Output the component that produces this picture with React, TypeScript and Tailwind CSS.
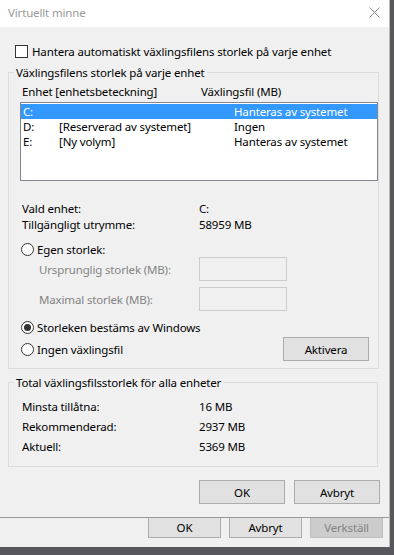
import type { ReactNode } from 'react';

const font = { fontFamily: '"Segoe UI", "Noto Sans", "Open Sans", sans-serif' };

function Radio({ checked }: { checked?: boolean }) {
  return (
    <span className="flex h-[13px] w-[13px] shrink-0 items-center justify-center rounded-full border border-[#333333] bg-white">
      {checked && <span className="h-[7px] w-[7px] rounded-full bg-[#333333]" />}
    </span>
  );
}

function Button({ children, className = '' }: { children: ReactNode; className?: string }) {
  return (
    <div
      className={`flex h-[24px] w-[86px] items-center justify-center border border-[#adadad] bg-[#e1e1e1] text-black ${className}`}
    >
      {children}
    </div>
  );
}

function GroupBox({ title, children, className = '' }: { title: string; children: ReactNode; className?: string }) {
  return (
    <fieldset className={`ml-[8px] w-[370px] border border-[#dcdcdc] ${className}`}>
      <legend className="ml-[5px] px-[2px] leading-[15px]">{title}</legend>
      {children}
    </fieldset>
  );
}

function InfoRow({ label, value, h }: { label: string; value: string; h: string }) {
  return (
    <div className={`flex items-center ${h}`}>
      <span className="w-[190px] pl-[13px]">{label}</span>
      <span>{value}</span>
    </div>
  );
}

const drives = [
  { drive: 'C:', label: '', size: 'Hanteras av systemet', selected: true },
  { drive: 'D:', label: '[Reserverad av systemet]', size: 'Ingen' },
  { drive: 'E:', label: '[Ny volym]', size: 'Hanteras av systemet' },
];

export default function App() {
  return (
    <div
      className="flex h-[555px] w-[394px] flex-col bg-[#58585c] text-[11.5px] leading-[15px] tracking-[-0.15px] text-black"
      style={font}
    >
      <div className="flex h-[547px]">
        <div className="flex w-[390px] flex-col border-r border-[#b9b9b9] bg-[#f0f0f0]">
          {/* Title bar */}
          <div className="flex h-[27px] shrink-0 items-center justify-between bg-white pb-[2px] pl-[8px] pr-[9px]">
            <span className="text-[#999999]">Virtuellt minne</span>
            <svg width="11" height="11" viewBox="0 0 11 11">
              <path d="M0.5 0.5 L10.5 10.5 M10.5 0.5 L0.5 10.5" stroke="#8a8a8a" strokeWidth="1" fill="none" />
            </svg>
          </div>

          {/* Dialog body */}
          <div className="flex h-[491px] shrink-0 flex-col border-b border-[#9a9a9a]">
            <div className="mt-[17px] flex h-[15px] items-center gap-[4px] pl-[15px]">
              <span className="h-[13px] w-[13px] border border-[#333333] bg-white" />
              <span>Hantera automatiskt växlingsfilens storlek på varje enhet</span>
            </div>

            <GroupBox title="Växlingsfilens storlek på varje enhet" className="mt-[6px] pb-[7px]">
              <div className="mt-[4px] flex h-[15px] items-center">
                <span className="w-[192px] pl-[13px]">Enhet [enhetsbeteckning]</span>
                <span>Växlingsfil (MB)</span>
              </div>

              <div className="ml-[11px] mt-[3px] h-[79px] w-[358px] border border-[#828790] bg-white pt-[1px]">
                {drives.map((d) => (
                  <div
                    key={d.drive}
                    className={`flex h-[15px] items-center ${d.selected ? 'bg-[#3399ff] text-white' : ''}`}
                  >
                    <span className="w-[38px] pl-[2px]">{d.drive}</span>
                    <span className="w-[175px]">{d.label}</span>
                    <span>{d.size}</span>
                  </div>
                ))}
              </div>

              <div className="mt-[19px]">
                <InfoRow label="Vald enhet:" value="C:" h="h-[16px]" />
                <InfoRow label="Tillgängligt utrymme:" value="58959 MB" h="h-[16px]" />
              </div>

              <div className="mt-[10px] flex h-[15px] items-center gap-[3px] pl-[12px]">
                <Radio />
                <span>Egen storlek:</span>
              </div>

              <div className="flex h-[24px] items-center">
                <span className="w-[190px] pl-[30px] text-[#838383]">Ursprunglig storlek (MB):</span>
                <span className="h-[24px] w-[88px] border border-[#cccccc] bg-[#f0f0f0]" />
              </div>
              <div className="mt-[6px] flex h-[24px] items-center">
                <span className="w-[190px] pl-[30px] text-[#838383]">Maximal storlek (MB):</span>
                <span className="h-[24px] w-[88px] border border-[#cccccc] bg-[#f0f0f0]" />
              </div>

              <div className="mt-[9px] flex h-[15px] items-center gap-[3px] pl-[12px]">
                <Radio checked />
                <span>Storleken bestäms av Windows</span>
              </div>

              <div className="mt-[2px] flex h-[24px] items-center pl-[12px]">
                <Radio />
                <span className="ml-[3px] flex-1">Ingen växlingsfil</span>
                <Button className="mr-[9px]">Aktivera</Button>
              </div>
            </GroupBox>

            <GroupBox title="Total växlingsfilsstorlek för alla enheter" className="mt-[6px] pb-[10px]">
              <div className="mt-[6px]">
                <InfoRow label="Minsta tillåtna:" value="16 MB" h="h-[20px]" />
                <InfoRow label="Rekommenderad:" value="2937 MB" h="h-[20px]" />
                <InfoRow label="Aktuell:" value="5369 MB" h="h-[20px]" />
              </div>
            </GroupBox>

            <div className="mt-[13px] flex justify-end gap-[9px] pr-[9px]">
              <Button>OK</Button>
              <Button>Avbryt</Button>
            </div>
          </div>

          {/* Parent window buttons peeking out below */}
          <div className="flex flex-1 justify-end gap-[8px] pr-[6px]">
            <div className="flex h-[20px] w-[73px] items-center justify-center border-x border-b border-[#adadad] bg-[#e1e1e1]">
              OK
            </div>
            <div className="flex h-[20px] w-[73px] items-center justify-center border-x border-b border-[#adadad] bg-[#e1e1e1]">
              Avbryt
            </div>
            <div className="flex h-[20px] w-[73px] items-center justify-center border-x border-b border-[#bfbfbf] bg-[#cccccc] text-[#838383]">
              Verkställ
            </div>
          </div>
        </div>
      </div>
    </div>
  );
}
